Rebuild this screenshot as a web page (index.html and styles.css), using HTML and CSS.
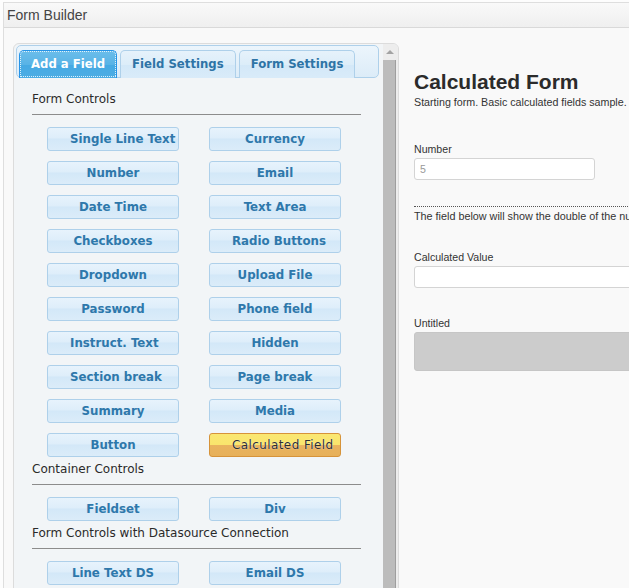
FILE: index.html
```html
<!DOCTYPE html>
<html>

<head>
  <meta charset="UTF-8">
  <title>Form Builder</title>
  <link rel="stylesheet" href="styles.css">
</head>

<body>
  <div class="window">
    <div class="titlebar">Form Builder</div>
    <div class="main">
      <div class="builder">
        <div class="builder-body">
          <ul class="tabs">
            <li class="tab active">Add a Field</li>
            <li class="tab">Field Settings</li>
            <li class="tab">Form Settings</li>
          </ul>
          <div class="tab-panel">
            <div class="group-title first">Form Controls</div>
            <div class="rule"></div>
            <div class="controls">
              <div class="ctrl">Single Line Text</div>
              <div class="ctrl">Currency</div>
              <div class="ctrl">Number</div>
              <div class="ctrl">Email</div>
              <div class="ctrl">Date Time</div>
              <div class="ctrl">Text Area</div>
              <div class="ctrl">Checkboxes</div>
              <div class="ctrl">Radio Buttons</div>
              <div class="ctrl">Dropdown</div>
              <div class="ctrl">Upload File</div>
              <div class="ctrl">Password</div>
              <div class="ctrl">Phone field</div>
              <div class="ctrl">Instruct. Text</div>
              <div class="ctrl">Hidden</div>
              <div class="ctrl">Section break</div>
              <div class="ctrl">Page break</div>
              <div class="ctrl">Summary</div>
              <div class="ctrl">Media</div>
              <div class="ctrl">Button</div>
              <div class="ctrl calc">Calculated Field</div>
            </div>
            <div class="group-title">Container Controls</div>
            <div class="rule"></div>
            <div class="controls">
              <div class="ctrl">Fieldset</div>
              <div class="ctrl">Div</div>
            </div>
            <div class="group-title">Form Controls with Datasource Connection</div>
            <div class="rule"></div>
            <div class="controls">
              <div class="ctrl">Line Text DS</div>
              <div class="ctrl">Email DS</div>
            </div>
          </div>
        </div>
        <div class="scrollbar">
          <div class="scroll-up"><span class="arrow"></span></div>
          <div class="thumb"></div>
        </div>
      </div>
      <div class="preview">
        <h1 class="form-title">Calculated Form</h1>
        <p class="form-desc">Starting form. Basic calculated fields sample.</p>
        <label class="field-label first">Number</label>
        <div class="input short">5</div>
        <div class="dotted"></div>
        <p class="note">The field below will show the double of the number entered above.</p>
        <label class="field-label calc-label">Calculated Value</label>
        <div class="input wide"></div>
        <label class="field-label untitled">Untitled</label>
        <div class="grey-box"></div>
      </div>
    </div>
  </div>
</body>

</html>
```

FILE: styles.css
```css
* {
  padding: 0;
  margin: 0;
  box-sizing: border-box;
}

body {
  overflow: hidden;
  background: #fdfdfd;
  width: 629px;
  height: 588px;
}

.window {
  margin: 2px 0 0 3px;
  border-left: 1px solid #dedede;
  border-top: 1px solid #dedede;
  width: 700px;
}

.titlebar {
  height: 25px;
  padding-left: 3px;
  line-height: 24px;
  font-family: "Liberation Sans", Arial, sans-serif;
  font-size: 14px;
  color: #444;
  background: linear-gradient(#f9f9f9, #efefef);
  border-bottom: 1px solid #d9d9d9;
}

.main {
  display: flex;
  align-items: flex-start;
  background: #f9f9f9;
  padding: 15px 0 0 9px;
  height: 600px;
}

/* left panel */

.builder {
  width: 386px;
  height: 580px;
  flex-shrink: 0;
  display: flex;
  border: 1px solid #dcdcdc;
  border-radius: 6px 6px 0 0;
  background: #f2f5f7;
  overflow: hidden;
}

.builder-body {
  flex: 1;
  padding: 1px 4px 0 2px;
}

.tabs {
  list-style: none;
  display: flex;
  gap: 3px;
  height: 33px;
  padding: 4px 2px 0 2px;
  border: 1px solid #aed0ea;
  border-radius: 5px;
  background: linear-gradient(#ecf5fc, #dcecf8);
}

.tab {
  height: 28px;
  padding: 0 11px;
  margin-bottom: -1px;
  line-height: 27px;
  border: 1px solid #aed0ea;
  border-bottom: none;
  border-radius: 5px 5px 0 0;
  background: linear-gradient(#e6f2fb 0%, #dcedf9 50%, #d3e8f8 51%, #d9ebf9 100%);
  font-family: "DejaVu Sans", Verdana, sans-serif;
  font-size: 11.7px;
  font-weight: bold;
  color: #2e74a6;
  white-space: nowrap;
}

.tab.active {
  border-color: #2694e8;
  background: linear-gradient(#6bbdea 0%, #58b3e6 50%, #45a9e3 51%, #4dade4 100%);
  color: #fff;
  outline: 1px dotted rgba(255, 255, 255, .8);
  outline-offset: -2px;
}

.tab-panel {
  padding-left: 16px;
}

.group-title {
  margin-top: 4px;
  line-height: 16px;
  font-family: "DejaVu Sans", Verdana, sans-serif;
  font-size: 12px;
  color: #2a2a2a;
}

.group-title.first {
  margin-top: 13px;
}

.rule {
  width: 329px;
  margin: 7px 0 12px;
  border-top: 1px solid #8c8c8c;
}

.controls {
  display: grid;
  grid-template-columns: 132px 132px;
  column-gap: 30px;
  row-gap: 10px;
  padding-left: 15px;
}

.ctrl {
  height: 24px;
  padding: 0 22px;
  line-height: 22px;
  text-align: center;
  white-space: nowrap;
  border: 1px solid #aed0ea;
  border-radius: 3px;
  background: linear-gradient(#e7f3fc 0%, #deeefa 45%, #d3e8f8 50%, #dbecf9 100%);
  font-family: "DejaVu Sans", Verdana, sans-serif;
  font-size: 11.8px;
  font-weight: bold;
  color: #2e78ab;
}

.ctrl.calc {
  border-color: #d6933a;
  background: linear-gradient(#fae772 0%, #f9e56c 48%, #e9b35e 50%, #e7b05a 100%);
  font-size: 12px;
  font-weight: normal;
  letter-spacing: .4px;
  color: #2e2e2e;
  text-shadow: 0 0 1px #fff;
}

.scrollbar {
  width: 15px;
  display: flex;
  flex-direction: column;
  background: #ededed;
}

.scroll-up {
  height: 16px;
  display: flex;
  justify-content: center;
  align-items: center;
  padding-right: 2px;
}

.arrow {
  width: 0;
  height: 0;
  border-left: 4px solid transparent;
  border-right: 4px solid transparent;
  border-bottom: 4px solid #a3a3a3;
}

.thumb {
  flex: 1;
  width: 13px;
  background: #bcbcbc;
  border-right: 1px solid #9e9e9e;
}

/* form preview */

.preview {
  width: 500px;
  flex-shrink: 0;
  padding: 27px 0 0 15px;
  font-family: "Liberation Sans", Arial, sans-serif;
  color: #333;
}

.form-title {
  font-size: 21px;
  line-height: 24px;
  font-weight: bold;
  color: #2b2b2b;
}

.form-desc {
  font-size: 10.7px;
  line-height: 14px;
  margin-top: 1px;
  white-space: nowrap;
}

.field-label {
  display: block;
  margin-top: 34px;
  font-size: 10.6px;
  line-height: 13px;
}

.field-label.calc-label {
  margin-top: 28px;
}

.field-label.untitled {
  margin-top: 29px;
}

.input {
  margin-top: 2px;
  height: 22px;
  padding-left: 5px;
  line-height: 20px;
  font-size: 10.6px;
  color: #999;
  background: #fff;
  border: 1px solid #d4d4d4;
  border-radius: 3px;
}

.input.short {
  width: 181px;
}

.input.wide {
  width: 420px;
}

.dotted {
  width: 480px;
  margin-top: 26px;
  border-top: 1px dotted #555;
}

.note {
  margin-top: 3px;
  font-size: 10.8px;
  line-height: 13px;
  white-space: nowrap;
}

.grey-box {
  margin-top: 2px;
  width: 420px;
  height: 39px;
  background: #cccccc;
  border: 1px solid #c6c6c6;
  border-radius: 3px;
}
```
